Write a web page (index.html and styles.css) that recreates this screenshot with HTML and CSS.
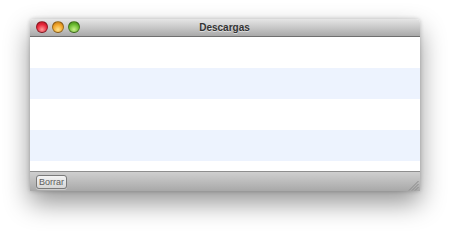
FILE: index.html
```html
<!DOCTYPE html>
<html>
<head>
<meta charset="utf-8">
<link rel="stylesheet" href="styles.css">
</head>
<body>
<div class="page">
  <div class="window">
    <div class="titlebar">
      <div class="lights">
        <span class="light red"></span>
        <span class="light yellow"></span>
        <span class="light green"></span>
      </div>
      <div class="title">Descargas</div>
    </div>
    <div class="list">
      <div class="row"></div>
      <div class="row alt"></div>
      <div class="row"></div>
      <div class="row alt"></div>
      <div class="row"></div>
    </div>
    <div class="bottombar">
      <button class="btn">Borrar</button>
      <svg class="grip" width="11" height="11" viewBox="0 0 11 11">
        <line x1="10.5" y1="1" x2="1" y2="10.5" stroke="#8a8a8a" stroke-width="1"/>
        <line x1="10.5" y1="4" x2="4" y2="10.5" stroke="#8a8a8a" stroke-width="1"/>
        <line x1="10.5" y1="7" x2="7" y2="10.5" stroke="#8a8a8a" stroke-width="1"/>
      </svg>
    </div>
  </div>
</div>
</body>
</html>
```

FILE: styles.css
```css
html, body {
  margin: 0;
  padding: 0;
  background: #ffffff;
}
.page {
  width: 450px;
  height: 233px;
  padding: 19px 0 0 30px;
  box-sizing: border-box;
}
.window {
  width: 390px;
  height: 172px;
  display: flex;
  flex-direction: column;
  box-shadow: 0 12px 26px rgba(0,0,0,0.42), 0 0 4px rgba(0,0,0,0.22);
  border-radius: 4px 4px 0 0;
  overflow: hidden;
  font-family: "Liberation Sans", Arial, sans-serif;
}
.titlebar {
  height: 17px;
  flex: none;
  position: relative;
  background: linear-gradient(#e6e6e6, #c8c8c8 50%, #a9a9a9);
  border-bottom: 1px solid #6f6f6f;
  display: flex;
  align-items: center;
  justify-content: center;
}
.lights {
  position: absolute;
  left: 6px;
  top: 2px;
  display: flex;
  gap: 4px;
}
.light {
  width: 12px;
  height: 12px;
  border-radius: 50%;
  box-sizing: border-box;
  border: 1px solid rgba(0,0,0,0.35);
}
.red { background: radial-gradient(circle at 50% 75%, #ff9a9a, #e8283a 55%, #a8101e); }
.yellow { background: radial-gradient(circle at 50% 75%, #ffe28a, #f0a42a 55%, #b06a10); }
.green { background: radial-gradient(circle at 50% 75%, #c8f08a, #6cbc32 55%, #3d7a14); }
.title {
  font-size: 10px;
  font-weight: bold;
  color: #333333;
  text-shadow: 0 1px 0 rgba(255,255,255,0.5);
  margin-left: -1px;
}
.list {
  height: 134px;
  flex: none;
  background: #ffffff;
  overflow: hidden;
}
.row {
  height: 31px;
  background: #ffffff;
}
.row.alt {
  background: #edf3fe;
}
.bottombar {
  flex: 1;
  border-top: 1px solid #8e8e8e;
  background: linear-gradient(#cfcfcf, #b8b8b8 60%, #a8a8a8);
  display: flex;
  align-items: center;
  justify-content: space-between;
  padding: 0 1px 0 6px;
  position: relative;
}
.btn {
  width: 31px;
  height: 14px;
  padding: 0;
  margin: 0;
  font-family: "Liberation Sans", Arial, sans-serif;
  font-size: 9px;
  color: #5c5c5c;
  border: 1px solid #7a7a7a;
  border-radius: 3px;
  background: linear-gradient(#f4f4f4, #d6d6d6);
  box-shadow: 0 1px 0 rgba(255,255,255,0.4);
  line-height: 12px;
}
.grip {
  align-self: flex-end;
  margin-bottom: 0;
}
```
